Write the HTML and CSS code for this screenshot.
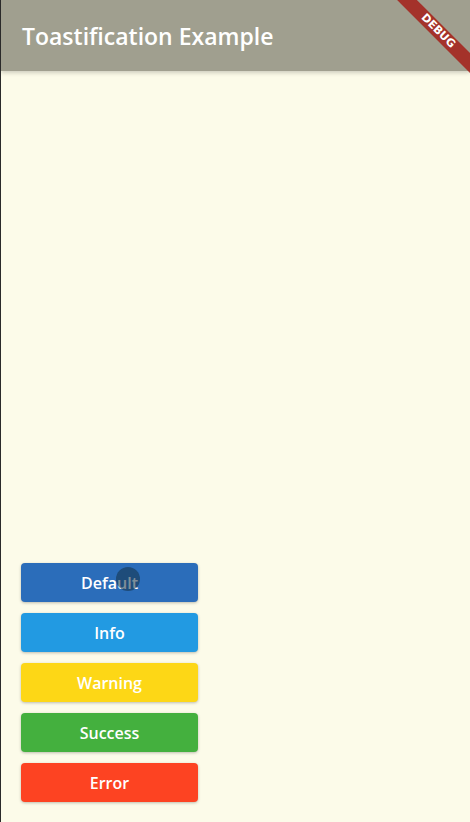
FILE: index.html
```html
<!DOCTYPE html>
<html>
<head>
<meta charset="utf-8">
<link rel="stylesheet" href="styles.css">
</head>
<body>
<div class="app">
  <header class="appbar">
    <h1 class="title">Toastification Example</h1>
  </header>
  <main class="content">
    <div class="buttons">
      <button class="btn btn-default">Default<span class="ripple"></span></button>
      <button class="btn btn-info">Info</button>
      <button class="btn btn-warning">Warning</button>
      <button class="btn btn-success">Success</button>
      <button class="btn btn-error">Error</button>
    </div>
  </main>
  <div class="banner">DEBUG</div>
</div>
</body>
</html>
```
FILE: styles.css
```css
html, body {
  margin: 0;
  padding: 0;
  height: 100%;
}
body {
  font-family: "Open Sans", "Noto Sans", sans-serif;
  background: #fcfbe9;
  overflow: hidden;
}
.app {
  position: relative;
  height: 822px;
  display: flex;
  flex-direction: column;
  border-left: 1px solid #2a2a2a;
  box-sizing: border-box;
  overflow: hidden;
}
.appbar {
  height: 71px;
  flex: none;
  background: #a09f8f;
  display: flex;
  align-items: center;
  padding-left: 21px;
  box-shadow: 0 2px 4px rgba(0,0,0,0.18);
  position: relative;
  z-index: 1;
}
.title {
  margin: 0;
  color: #fff;
  font-size: 23px;
  font-weight: 600;
  letter-spacing: 0;
}
.content {
  flex: 1;
  display: flex;
  flex-direction: column;
  justify-content: flex-end;
  padding: 0 0 20px 20px;
}
.buttons {
  display: flex;
  flex-direction: column;
  gap: 11px;
}
.btn {
  position: relative;
  width: 177px;
  height: 39px;
  border: none;
  border-radius: 4px;
  color: #fff;
  font-family: "Open Sans", "Noto Sans", sans-serif;
  font-size: 16px;
  font-weight: 600;
  box-shadow: 0 1px 3px rgba(0,0,0,0.25);
  padding: 0;
  overflow: hidden;
}
.btn-default { background: #2b6dba; }
.btn-info { background: #229ae2; }
.btn-warning { background: #fdd716; }
.btn-success { background: #44b03e; }
.btn-error { background: #fd4322; }
.ripple {
  position: absolute;
  left: 95px;
  top: 4px;
  width: 24px;
  height: 24px;
  border-radius: 50%;
  background: rgba(20,50,70,0.55);
}
.banner {
  position: absolute;
  left: 377px;
  top: 24px;
  width: 120px;
  height: 14px;
  line-height: 14px;
  transform: rotate(45deg);
  background: rgba(165,30,25,0.85);
  color: #fff;
  font-family: "DejaVu Sans", sans-serif;
  font-size: 11px;
  font-weight: 700;
  text-align: center;
  z-index: 2;
}
```
